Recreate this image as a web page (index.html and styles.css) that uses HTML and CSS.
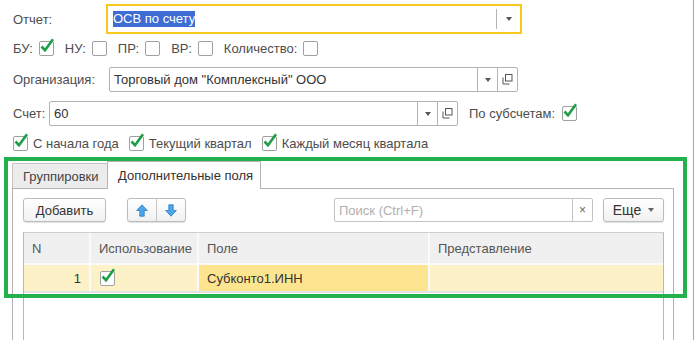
FILE: index.html
```html
<!DOCTYPE html>
<html lang="ru">
<head>
    <meta charset="UTF-8">
    <title>ОСВ по счету</title>
    <link rel="stylesheet" href="styles.css">
</head>
<body>
    <svg class="defs" width="0" height="0">
        <symbol id="check" viewBox="0 0 16 17">
            <path d="M2.5 9.5 L6 13.2 L14 2.2" fill="none" stroke="#1f9d47" stroke-width="2.6"/>
        </symbol>
        <symbol id="copy" viewBox="0 0 11 11">
            <rect x="3.5" y="0.5" width="6.5" height="6.5" fill="none" stroke="#555"/>
            <path d="M1 3.5 V10 H7.5" fill="none" stroke="#555"/>
        </symbol>
        <symbol id="up" viewBox="0 0 12 13">
            <path d="M6 0.8 L11.3 6.5 H8.2 V12.2 H3.8 V6.5 H0.7 Z" fill="#4ea6ea" stroke="#2a7cc4" stroke-width="0.8"/>
        </symbol>
        <symbol id="down" viewBox="0 0 12 13">
            <path d="M6 12.2 L11.3 6.5 H8.2 V0.8 H3.8 V6.5 H0.7 Z" fill="#4ea6ea" stroke="#2a7cc4" stroke-width="0.8"/>
        </symbol>
    </svg>

    <div class="window">
        <div class="form">
            <div class="row row-report">
                <span class="label-report">Отчет:</span>
                <div class="field field-focus">
                    <div class="field-value"><span class="selected">ОСВ по счету</span></div>
                    <div class="field-btn"><span class="arrow"></span></div>
                </div>
            </div>

            <div class="row row-flags">
                <label class="flag">БУ: <span class="cb"><svg><use href="#check"/></svg></span></label>
                <label class="flag">НУ: <span class="cb"></span></label>
                <label class="flag">ПР: <span class="cb"></span></label>
                <label class="flag">ВР: <span class="cb"></span></label>
                <label class="flag">Количество: <span class="cb"></span></label>
            </div>

            <div class="row row-org">
                <span class="label-org">Организация:</span>
                <div class="field field-org">
                    <div class="field-value">Торговый дом "Комплексный" ООО</div>
                    <div class="field-btn"><span class="arrow"></span></div>
                    <div class="field-btn"><svg class="copy"><use href="#copy"/></svg></div>
                </div>
            </div>

            <div class="row row-account">
                <span class="label-account">Счет:</span>
                <div class="field field-account">
                    <div class="field-value">60</div>
                    <div class="field-btn"><span class="arrow"></span></div>
                    <div class="field-btn"><svg class="copy"><use href="#copy"/></svg></div>
                </div>
                <label class="flag sub">По субсчетам: <span class="cb"><svg><use href="#check"/></svg></span></label>
            </div>

            <div class="row row-period">
                <label class="period"><span class="cb"><svg><use href="#check"/></svg></span> С начала года</label>
                <label class="period"><span class="cb"><svg><use href="#check"/></svg></span> Текущий квартал</label>
                <label class="period"><span class="cb"><svg><use href="#check"/></svg></span> Каждый месяц квартала</label>
            </div>
        </div>

        <div class="tabs">
            <div class="tab tab-groups">Группировки</div>
            <div class="tab tab-fields active">Дополнительные поля</div>
        </div>

        <div class="panel">
            <div class="toolbar">
                <div class="btn btn-add">Добавить</div>
                <div class="btn btn-arrows">
                    <span class="half"><svg class="move"><use href="#up"/></svg></span>
                    <span class="half"><svg class="move"><use href="#down"/></svg></span>
                </div>
                <div class="search">
                    <div class="search-input">Поиск (Ctrl+F)</div>
                    <div class="search-clear">×</div>
                </div>
                <div class="btn btn-more">Еще <span class="arrow"></span></div>
            </div>

            <div class="grid">
                <div class="grid-head">
                    <div class="cell">N</div>
                    <div class="cell">Использование</div>
                    <div class="cell">Поле</div>
                    <div class="cell">Представление</div>
                </div>
                <div class="grid-row">
                    <div class="cell num">1</div>
                    <div class="cell"><span class="cb"><svg><use href="#check"/></svg></span></div>
                    <div class="cell current">Субконто1.ИНН</div>
                    <div class="cell"></div>
                </div>
            </div>
        </div>

        <div class="annotation"></div>
    </div>
</body>
</html>
```

FILE: styles.css
```css
body {
    margin: 0;
    font-family: "Liberation Sans", Arial, sans-serif;
    font-size: 13px;
    color: #4d4d4d;
    background-color: #fff;
}

.defs {
    position: absolute;
}

.window {
    width: 693px;
    height: 340px;
    border-right: 1px solid #a8a8a8;
    position: relative;
    overflow: hidden;
    display: flex;
    flex-direction: column;
}

.form {
    padding-left: 13px;
}

.row {
    display: flex;
    align-items: center;
}

.row-report {
    margin-top: 4px;
    height: 30px;
}
.row-flags {
    margin-top: 6px;
    height: 16px;
}
.row-org {
    margin-top: 11px;
    height: 25px;
}
.row-account {
    margin-top: 9px;
    height: 25px;
}
.row-period {
    margin-top: 9px;
    height: 16px;
}

.label-report { width: 93px; }
.label-org { width: 96px; }
.label-account { width: 36px; }

/* input fields */
.field {
    display: flex;
    height: 100%;
    box-sizing: border-box;
    border: 1px solid #b3b3b3;
    border-radius: 2px;
    background-color: #fff;
}
.field-focus {
    width: 416px;
    border: 2px solid #f7c81e;
    border-radius: 0;
}
.field-org,
.field-account {
    width: 409px;
}
.field-value {
    flex: 1;
    display: flex;
    align-items: center;
    padding-left: 4px;
    color: #333;
    white-space: nowrap;
}
.field-focus .field-value {
    padding-left: 5px;
}
.selected {
    background-color: #3d6dd2;
    color: #fff;
    line-height: 16px;
}
.field-btn {
    width: 19px;
    border-left: 1px solid #b3b3b3;
    display: flex;
    align-items: center;
    justify-content: center;
}
.field-focus .field-btn {
    width: 23px;
    margin: 3px 0;
}

.arrow {
    width: 0;
    height: 0;
    border-left: 3px solid transparent;
    border-right: 3px solid transparent;
    border-top: 4px solid #555;
}
.copy {
    width: 11px;
    height: 11px;
}

/* checkboxes */
.cb {
    width: 13px;
    height: 13px;
    border: 1px solid #a0a0a0;
    border-radius: 2px;
    background-color: #fff;
    position: relative;
    flex: none;
}
.cb svg {
    position: absolute;
    left: -1px;
    top: -5px;
    width: 16px;
    height: 17px;
}

.flag {
    display: flex;
    align-items: center;
    gap: 6px;
    margin-right: 11px;
}
.sub {
    margin-left: 11px;
    gap: 7px;
}
.period {
    display: flex;
    align-items: center;
    gap: 5px;
    margin-right: 10px;
}

/* tabs */
.tabs {
    display: flex;
    align-items: flex-end;
    margin: 10px 0 0 12px;
    height: 27px;
    position: relative;
    z-index: 1;
}
.tab {
    box-sizing: border-box;
    height: 25px;
    padding-left: 10px;
    display: flex;
    align-items: center;
    background-color: #ececec;
    border: 1px solid #c6c6c6;
    border-bottom: none;
    color: #444;
}
.tab-groups {
    width: 96px;
}
.tab-fields {
    width: 154px;
    margin-left: -1px;
}
.active {
    height: 28px;
    margin-bottom: -1px;
    background-color: #fff;
    border-color: #b3b3b3;
    color: #333;
}

.panel {
    flex: 1;
    margin-left: 12px;
    width: 662px;
    box-sizing: border-box;
    border: 1px solid #b3b3b3;
    border-bottom: none;
    padding: 9px 9px 0 10px;
    display: flex;
    flex-direction: column;
}

/* toolbar */
.toolbar {
    display: flex;
    height: 24px;
}
.btn {
    box-sizing: border-box;
    height: 24px;
    border: 1px solid #bcbcbc;
    border-radius: 3px;
    background: linear-gradient(#ffffff, #f1f1f1);
    box-shadow: 0 1px 1px rgba(0, 0, 0, 0.12);
    display: flex;
    align-items: center;
    justify-content: center;
    color: #333;
}
.btn-add {
    width: 83px;
}
.btn-arrows {
    width: 59px;
    margin-left: 21px;
}
.half {
    flex: 1;
    height: 100%;
    display: flex;
    align-items: center;
    justify-content: center;
}
.half + .half {
    border-left: 1px solid #c4c4c4;
}
.move {
    width: 12px;
    height: 13px;
}
.search {
    margin-left: auto;
    width: 259px;
    box-sizing: border-box;
    border: 1px solid #c2c2c2;
    border-radius: 2px;
    display: flex;
}
.search-input {
    flex: 1;
    display: flex;
    align-items: center;
    padding-left: 4px;
    color: #b0b0b0;
}
.search-clear {
    width: 19px;
    border-left: 1px solid #c2c2c2;
    display: flex;
    align-items: center;
    justify-content: center;
    color: #666;
    font-size: 12px;
}
.btn-more {
    width: 61px;
    margin-left: 10px;
    gap: 7px;
    font-size: 14px;
}
.btn-more .arrow {
    border-top-color: #666;
}

/* table */
.grid {
    flex: 1;
    margin-top: 10px;
    border: 1px solid #b8b8b8;
    border-bottom: none;
    border-top-color: #cfcfcf;
}
.grid-head,
.grid-row {
    display: grid;
    grid-template-columns: 67px 108px 231px 1fr;
}
.grid-head {
    height: 30px;
    background-color: #f0f0f0;
    border-bottom: 2px solid #fbfbfb;
}
.grid-row {
    height: 26px;
    background-color: #fdf2c7;
    border-bottom: 2px solid #e3e3e3;
}
.cell {
    display: flex;
    align-items: center;
    padding-left: 8px;
    border-right: 2px solid #fbfbfb;
    color: #555;
}
.cell:last-child {
    border-right: none;
}
.grid-row .cell {
    color: #333;
}
.grid-row .cell:nth-child(2) {
    padding-left: 9px;
}
.num {
    justify-content: flex-end;
    padding-right: 8px;
}
.current {
    background-color: #fde590;
}

/* green frame drawn over the tab panel */
.annotation {
    position: absolute;
    left: 4px;
    top: 157px;
    width: 683px;
    height: 141px;
    box-sizing: border-box;
    border: 4px solid #22b14c;
    z-index: 2;
}
```
